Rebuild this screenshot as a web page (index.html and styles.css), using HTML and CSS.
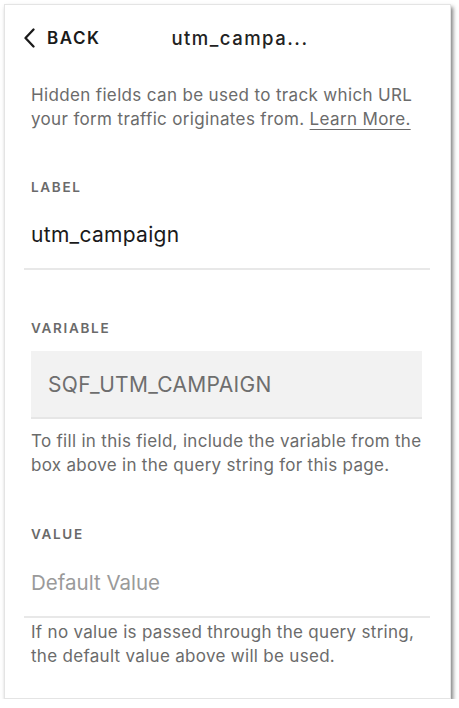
FILE: index.html
```html
<!DOCTYPE html>
<html lang="en">
<head>
<meta charset="utf-8">
<title>utm_campaign</title>
<link rel="stylesheet" href="styles.css">
</head>
<body>
<div class="panel">
  <header class="header">
    <a class="back" href="#">
      <svg class="chev" width="13" height="20" viewBox="0 0 13 20" aria-hidden="true"><path d="M10.5 1.5 L2.5 10 L10.5 18.5" fill="none" stroke="#1a1a1a" stroke-width="2.3" stroke-linecap="round" stroke-linejoin="round"/></svg>
      <span class="back-text">BACK</span>
    </a>
    <h1 class="title">utm_campa...</h1>
  </header>

  <p class="desc">Hidden fields can be used to track which URL your form traffic originates from. <a class="link" href="#">Learn More.</a></p>

  <section class="field">
    <div class="label">LABEL</div>
    <div class="input-row">
      <div class="input-text">utm_campaign</div>
    </div>
  </section>

  <section class="field variable">
    <div class="label">VARIABLE</div>
    <div class="var-box">SQF_UTM_CAMPAIGN</div>
    <p class="help">To fill in this field, include the variable from the box above in the query string for this page.</p>
  </section>

  <section class="field value">
    <div class="label">VALUE</div>
    <div class="input-row">
      <div class="input-text placeholder">Default Value</div>
    </div>
    <p class="help tight">If no value is passed through the query string, the default value above will be used.</p>
  </section>
</div>
</body>
</html>
```

FILE: styles.css
```css
* { box-sizing: border-box; }
html, body { margin: 0; padding: 0; background: #ffffff; }
body {
  padding: 4px 0 0 4px;
  font-family: Inter, "Liberation Sans", Arial, sans-serif;
  color: #1a1a1a;
}
.panel {
  width: 447px;
  height: 695px;
  background: #ffffff;
  border: 1px solid #e4e4e4;
  box-shadow: 2px 3px 4px rgba(0, 0, 0, 0.5);
  padding: 0 20px 0 19px;
}
.header {
  display: flex;
  align-items: center;
  padding-top: 23px;
  height: 20px;
  box-sizing: content-box;
}
.back {
  display: flex;
  align-items: center;
  gap: 11px;
  text-decoration: none;
  color: #1a1a1a;
}
.chev { display: block; margin-left: -1px; }
.back-text {
  font-size: 17px;
  line-height: 20px;
  font-weight: 600;
  letter-spacing: 1.5px;
}
.title {
  margin: 0 0 0 71px;
  font-size: 18.5px;
  line-height: 20px;
  font-weight: 500;
  letter-spacing: 1.5px;
  color: #222222;
}
.desc {
  margin: 35px 0 0 0;
  padding: 0 0 0 7px;
  font-size: 17px;
  line-height: 24px;
  letter-spacing: 0.35px;
  color: #6b6b6b;
}
.link {
  color: #6b6b6b;
  text-decoration: underline;
  text-underline-offset: 4px;
  text-decoration-thickness: 1px;
}
.field { margin-top: 48px; }
.variable { margin-top: 50px; }
.value { margin-top: 49px; }
.label {
  padding-left: 7px;
  font-size: 13.5px;
  line-height: 16px;
  font-weight: 600;
  letter-spacing: 1.7px;
  color: #6a6a6a;
}
.input-row {
  margin-top: 28px;
  padding: 0 7px 21px;
  border-bottom: 2px solid #e8e8e8;
}
.input-text {
  font-size: 21px;
  line-height: 24px;
  letter-spacing: 0.3px;
  color: #1a1a1a;
}
.placeholder {
  font-size: 20.5px;
  letter-spacing: 0;
  color: #9a9a9a;
}
.value .input-row { margin-top: 29px; }
.var-box {
  margin: 15px 8px 0 7px;
  padding: 22px 17px 20px;
  background: #f2f2f2;
  border-bottom: 2px solid #e6e6e6;
  font-size: 21px;
  line-height: 24px;
  letter-spacing: 0.3px;
  color: #6e6e6e;
}
.help {
  margin: 10px 0 0 0;
  padding-left: 7px;
  font-size: 17px;
  line-height: 24px;
  letter-spacing: 0.3px;
  color: #6b6b6b;
}
.help.tight { margin-top: 2px; }
```
